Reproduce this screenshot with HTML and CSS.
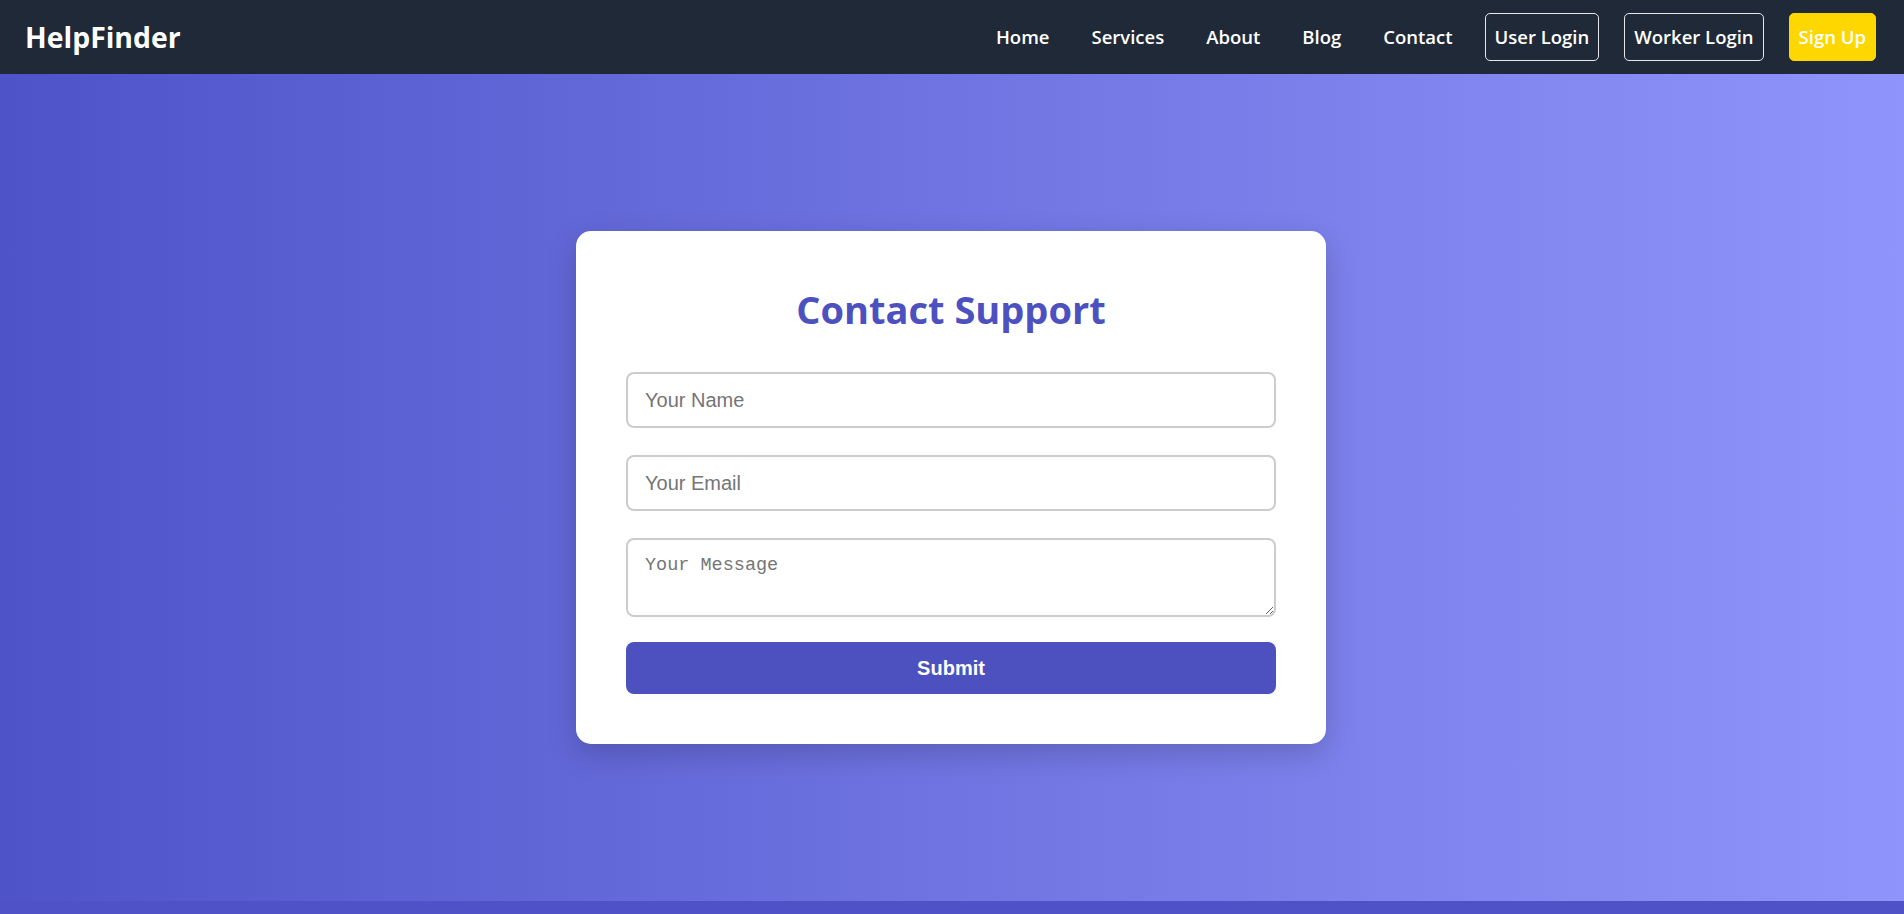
FILE: index.html
```html
<!DOCTYPE html>
<html lang="en">
<head>
<meta charset="utf-8">
<title>HelpFinder - Contact Support</title>
<link rel="stylesheet" href="styles.css">
</head>
<body>
  <nav class="navbar">
    <div class="logo">HelpFinder</div>
    <ul class="nav-links">
      <li class="nav-item"><a href="#" class="nav-link">Home</a></li>
      <li class="nav-item"><a href="#" class="nav-link">Services</a></li>
      <li class="nav-item"><a href="#" class="nav-link">About</a></li>
      <li class="nav-item"><a href="#" class="nav-link">Blog</a></li>
      <li class="nav-item"><a href="#" class="nav-link">Contact</a></li>
      <li class="nav-item nav-item-btn nav-item-first-btn"><a href="#" class="nav-link btn-outline">User Login</a></li>
      <li class="nav-item nav-item-btn"><a href="#" class="nav-link btn-outline">Worker Login</a></li>
      <li class="nav-item nav-item-btn"><a href="#" class="nav-link btn-signup">Sign Up</a></li>
    </ul>
  </nav>

  <main class="hero">
    <div class="card">
      <h2 class="card-title">Contact Support</h2>
      <form class="contact-form">
        <input class="field" type="text" placeholder="Your Name">
        <input class="field" type="email" placeholder="Your Email">
        <textarea class="field field-area" placeholder="Your Message"></textarea>
        <button class="submit-btn" type="button">Submit</button>
      </form>
    </div>
  </main>
  <div class="bottom-strip"></div>
</body>
</html>
```

FILE: styles.css
```css
* {
  box-sizing: border-box;
}

html, body {
  margin: 0;
  padding: 0;
  height: 914px;
  overflow: hidden;
}

body {
  background: #4e52c6;
  font-family: "Open Sans", "Noto Sans", sans-serif;
}

.navbar {
  height: 74px;
  background: #1f2937;
  display: flex;
  align-items: center;
  justify-content: space-between;
  padding: 0 28px 0 25px;
}

.logo {
  color: #ffffff;
  font-size: 28.4px;
  font-weight: 700;
}

.nav-links {
  list-style: none;
  margin: 0;
  padding: 0;
  display: flex;
  align-items: center;
}

.nav-item {
  margin-left: 24px;
}

.nav-item-btn {
  margin-left: 25px;
}

.nav-item-first-btn {
  margin-left: 23px;
}

.nav-link {
  display: block;
  color: #ffffff;
  text-decoration: none;
  font-size: 18.5px;
  font-weight: 600;
  line-height: 28px;
  padding: 9px 8px;
  border: 1px solid transparent;
  border-radius: 5px;
}

.btn-outline {
  border-color: #e5e7eb;
  padding: 9px 9px;
}

.btn-signup {
  background: #ffd700;
  border-color: #ffd700;
  padding: 9px 9px;
}

.hero {
  height: 827px;
  background: linear-gradient(to right, #4e54c8, #8f94fb);
  display: flex;
  align-items: center;
  justify-content: center;
}

.card {
  width: 750px;
  background: #ffffff;
  border-radius: 15px;
  padding: 54px 50px 50px;
  box-shadow: 0 10px 30px rgba(0, 0, 0, 0.18);
  margin-left: -2px;
}

.card-title {
  margin: 0 0 39px;
  text-align: center;
  color: #4c51bf;
  font-size: 38px;
  font-weight: 700;
  line-height: 48px;
}

.contact-form {
  display: flex;
  flex-direction: column;
}

.field {
  width: 100%;
  height: 56px;
  border: 2px solid #cccccc;
  border-radius: 8px;
  padding: 0 17px;
  font-family: "Liberation Sans", Arial, sans-serif;
  font-size: 20px;
  color: #333;
  margin-bottom: 27px;
  background: #fff;
  outline: none;
}

.field::placeholder {
  color: #757575;
}

.field-area {
  height: 79px;
  padding: 15px 17px;
  resize: vertical;
  font-family: "Liberation Mono", monospace;
  font-size: 18.5px;
  margin-bottom: 25px;
}

.submit-btn {
  width: 100%;
  height: 52px;
  border: none;
  border-radius: 8px;
  background: #4c51bf;
  color: #ffffff;
  font-family: "Liberation Sans", Arial, sans-serif;
  font-size: 20px;
  font-weight: 700;
  cursor: pointer;
}

.bottom-strip {
  height: 13px;
  background: #4e52c6;
}
```
